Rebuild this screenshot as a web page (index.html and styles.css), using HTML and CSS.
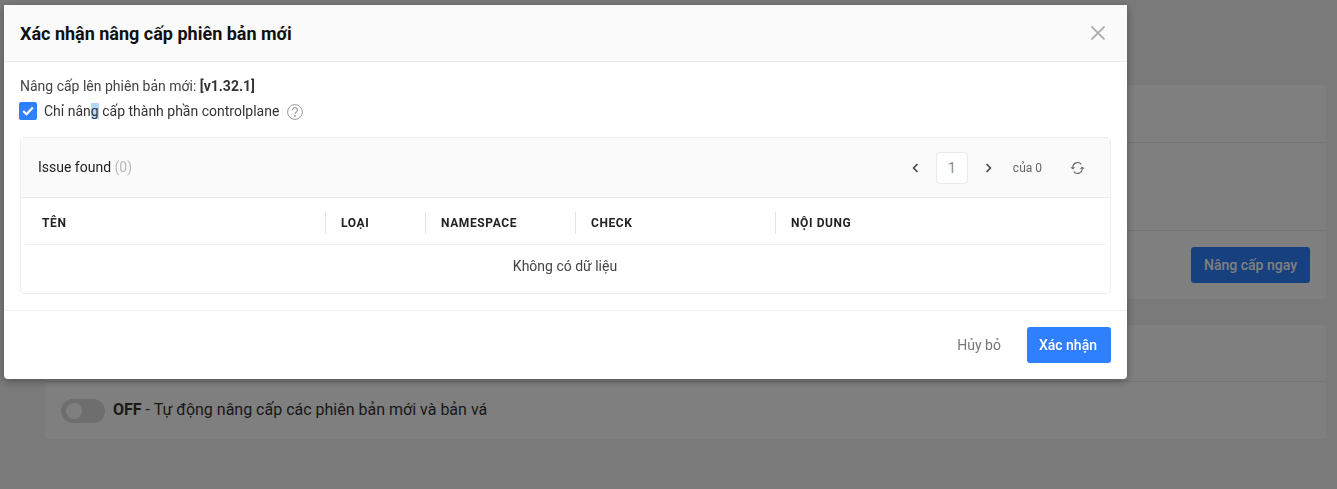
FILE: index.html
```html
<!DOCTYPE html>
<html lang="vi">
<head>
    <meta charset="UTF-8">
    <meta name="viewport" content="width=device-width, initial-scale=1.0">
    <title>Nâng cấp phiên bản</title>
    <link rel="stylesheet" href="styles.css">
</head>
<body>
    <div class="page">
        <div class="panel">
            <div class="panel-row row-a"></div>
            <div class="panel-row row-b"></div>
            <div class="panel-row row-c">
                <button class="btn btn-primary">Nâng cấp ngay</button>
            </div>
        </div>
        <div class="panel">
            <div class="panel-row row-d"></div>
            <div class="panel-row row-e">
                <span class="toggle"><span class="toggle-knob"></span></span>
                <span class="auto-text"><b>OFF</b> - Tự động nâng cấp các phiên bản mới và bản vá</span>
            </div>
        </div>
    </div>

    <div class="overlay">
        <div class="modal">
            <div class="modal-header">
                <h1>Xác nhận nâng cấp phiên bản mới</h1>
                <svg class="close" width="14" height="14" viewBox="0 0 14 14" fill="none" stroke="currentColor" stroke-width="1.6"><path d="M0.5 0.5 13.5 13.5M13.5 0.5 0.5 13.5"></path></svg>
            </div>
            <div class="modal-body">
                <div class="version-line">Nâng cấp lên phiên bản mới: <b>[v1.32.1]</b></div>
                <div class="check-line">
                    <span class="checkbox">
                        <svg width="12" height="10" viewBox="0 0 12 10" fill="none" stroke="#fff" stroke-width="2.2"><path d="M1.2 5 4.5 8.2 10.8 1.5"></path></svg>
                    </span>
                    <span class="check-label">Chỉ nân<span class="picked">g</span> cấp thành phần controlplane</span>
                    <svg class="help" width="16" height="16" viewBox="0 0 16 16" fill="none" stroke="#999"><circle cx="8" cy="8" r="7.4"></circle><path d="M5.6 6.2a2.4 2.4 0 1 1 3.6 2c-.8.5-1.200.9-1.200 1.800" stroke-width="1.2"></path><circle cx="8" cy="12" r=".5" fill="#999"></circle></svg>
                </div>
                <div class="issues">
                    <div class="issues-head">
                        <span class="issues-title">Issue found <span class="count">(0)</span></span>
                        <div class="pager">
                            <svg class="pager-arrow prev" width="7" height="10" viewBox="0 0 7 10" fill="none" stroke="currentColor" stroke-width="1.6"><path d="M5.5 1 1.6 5l3.9 4"></path></svg>
                            <span class="pager-num">1</span>
                            <svg class="pager-arrow" width="7" height="10" viewBox="0 0 7 10" fill="none" stroke="currentColor" stroke-width="1.6"><path d="M1.5 1 5.4 5 1.500 9"></path></svg>
                            <span class="pager-total">của 0</span>
                            <svg class="refresh" width="15" height="14" viewBox="0 0 15 14" fill="none" stroke="#666" stroke-width="1.1"><path d="M2.800 6.500A4.800 4.800 0 0 1 11.300 3.300"></path><path d="M12.200 7.500A4.800 4.800 0 0 1 3.700 10.700"></path><path d="M0.300 6.300H5.300L2.800 8.600Z" fill="#666" stroke="none"></path><path d="M9.700 7.700H14.700L12.200 5.400Z" fill="#666" stroke="none"></path></svg>
                        </div>
                    </div>
                    <div class="issues-table">
                        <div class="th-row">
                            <div class="th col-name">Tên</div>
                            <div class="th col-type">Loại</div>
                            <div class="th col-ns">Namespace</div>
                            <div class="th col-check">Check</div>
                            <div class="th col-content">Nội dung</div>
                        </div>
                        <div class="empty">Không có dữ liệu</div>
                    </div>
                </div>
            </div>
            <div class="modal-footer">
                <button class="btn btn-text">Hủy bỏ</button>
                <button class="btn btn-primary">Xác nhận</button>
            </div>
        </div>
    </div>
</body>
</html>
```

FILE: styles.css
```css
* {
    box-sizing: border-box;
}
html, body {
    height: 100%;
}
body {
    margin: 0;
    overflow: hidden;
    font-family: Roboto, "Noto Sans", sans-serif;
    font-size: 14px;
    color: #333;
    background-color: #f5f5f5;
}
.page {
    padding: 85px 11px 0 45px;
}
.panel {
    background-color: #fff;
    border-radius: 4px;
    margin-bottom: 26px;
}
.panel-row {
    display: flex;
    align-items: center;
    border-bottom: 1px solid #eaeaea;
}
.panel-row:last-child {
    border-bottom: none;
}
.row-a {
    height: 58px;
}
.row-b {
    height: 88px;
}
.row-c {
    height: 68px;
    justify-content: flex-end;
    padding-right: 16px;
}
.row-c .btn-primary {
    padding: 0 13px;
}
.row-d {
    height: 57px;
}
.row-e {
    height: 57px;
    padding-left: 16px;
}
.toggle {
    display: block;
    width: 44px;
    height: 24px;
    padding: 4px 5px;
    margin-right: 8px;
    border-radius: 12px;
    background-color: #dcdcdc;
}
.toggle-knob {
    display: block;
    width: 16px;
    height: 16px;
    border-radius: 50%;
    background-color: #fff;
}
.auto-text {
    margin-top: -2px;
    font-size: 16px;
    color: #333;
}
.btn {
    height: 36px;
    border: none;
    border-radius: 3px;
    font-family: inherit;
    font-size: 14px;
    font-weight: 500;
    cursor: pointer;
}
.btn-primary {
    padding: 0 14px 0 12px;
    background-color: #2f80ff;
    color: #fff;
}
.btn-text {
    padding: 0 26px 0 0;
    background: none;
    color: #777;
    font-weight: 400;
}

.overlay {
    position: fixed;
    top: 0;
    left: 0;
    right: 0;
    bottom: 0;
    padding: 5px 0 0 4px;
    background-color: rgba(0, 0, 0, 0.5);
}
.modal {
    width: 1123px;
    height: 374px;
    background-color: #fff;
    border-radius: 0 0 4px 4px;
    box-shadow: 0 2px 8px rgba(0, 0, 0, 0.35);
    display: flex;
    flex-direction: column;
}
.modal-header {
    height: 57px;
    flex-shrink: 0;
    padding: 0 22px 0 16px;
    display: flex;
    align-items: center;
    justify-content: space-between;
    background-color: #fafafa;
    border-bottom: 1px solid #eee;
}
.modal-header h1 {
    margin: 0;
    font-size: 18px;
    font-weight: 700;
    color: #111;
}
.close {
    color: #a8a8a8;
}
.modal-body {
    flex: 1;
    padding: 14px 16px 0;
}
.version-line {
    line-height: 20px;
    color: #444;
}
.version-line b {
    color: #333;
}
.check-line {
    display: flex;
    align-items: center;
    height: 24px;
    margin-top: 3px;
    margin-left: -1px;
}
.checkbox {
    width: 18px;
    height: 18px;
    border-radius: 2px;
    background-color: #2f80ff;
    display: flex;
    align-items: center;
    justify-content: center;
}
.check-label {
    margin-left: 7px;
    color: #333;
}
.picked {
    background-color: #b4d5fe;
}
.help {
    margin-left: 8px;
    margin-top: 1px;
}
.issues {
    margin-top: 14px;
    height: 157px;
    border: 1px solid #eee;
    border-radius: 4px;
}
.issues-head {
    height: 60px;
    padding: 0 25px 0 17px;
    display: flex;
    align-items: center;
    justify-content: space-between;
    background-color: #fafafa;
    border-bottom: 1px solid #eee;
}
.issues-title {
    margin-top: -2px;
    color: #222;
}
.count {
    color: #bbb;
}
.pager {
    display: flex;
    align-items: center;
}
.pager-arrow {
    color: #444;
}
.pager-arrow.prev {
    margin-left: 1px;
}
.pager-num {
    width: 32px;
    height: 32px;
    margin: 0 17px;
    border: 1px solid #e9e9ee;
    border-radius: 4px;
    background-color: #fff;
    color: #888;
    text-align: center;
    line-height: 30px;
}
.pager-total {
    margin-left: 21px;
    font-size: 12px;
    color: #666;
}
.refresh {
    margin-left: 28px;
}
.issues-table {
    padding: 0 5px 0 4px;
}
.th-row {
    display: flex;
    align-items: center;
    height: 47px;
    border-bottom: 1px solid #eee;
}
.th {
    height: 22px;
    margin-top: 4px;
    padding-left: 15px;
    font-size: 12px;
    font-weight: 700;
    line-height: 22px;
    letter-spacing: 0.6px;
    text-transform: uppercase;
    color: #222;
    border-left: 1px solid #e4e4e4;
}
.col-name {
    width: 300px;
    padding-left: 17px;
    border-left: none;
}
.col-type {
    width: 100px;
}
.col-ns {
    width: 150px;
}
.col-check {
    width: 200px;
}
.col-content {
    flex: 1;
}
.empty {
    height: 48px;
    line-height: 42px;
    text-align: center;
    color: #444;
}
.modal-footer {
    height: 69px;
    flex-shrink: 0;
    padding: 16px 16px 0 0;
    display: flex;
    align-items: flex-start;
    justify-content: flex-end;
    border-top: 1px solid #eee;
}
```
